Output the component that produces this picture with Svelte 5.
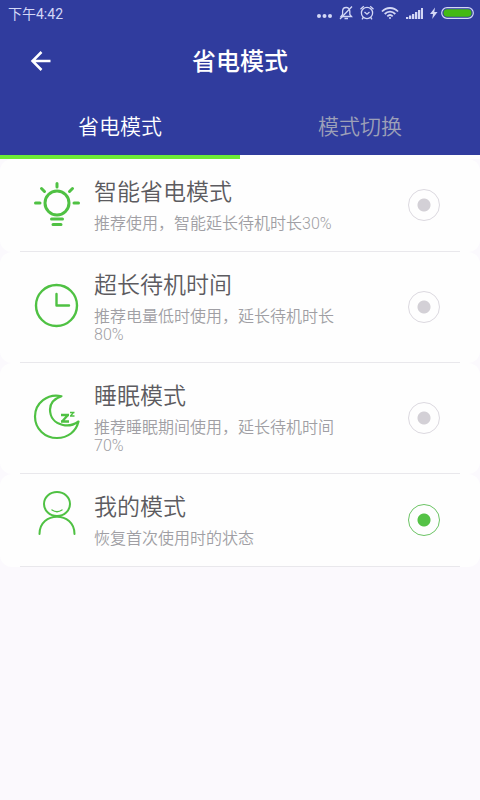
<script>
  const tabs = ['省电模式', '模式切换'];
  const modes = [
    { id: 'smart', title: '智能省电模式', desc: '推荐使用，智能延长待机时长30%' },
    { id: 'standby', title: '超长待机时间', desc: '推荐电量低时使用，延长待机时长80%' },
    { id: 'sleep', title: '睡眠模式', desc: '推荐睡眠期间使用，延长待机时间70%' },
    { id: 'mine', title: '我的模式', desc: '恢复首次使用时的状态' },
  ];

  let tab = 0;
  let selected = 'mine';
</script>

<header>
  <div class="status">
    <span>下午4:42</span>
    <div class="indicators">
      <svg width="15" height="16" fill="currentColor">
        <circle cx="2" cy="11" r="2" />
        <circle cx="7.5" cy="11" r="2" />
        <circle cx="13" cy="11" r="2" />
      </svg>
      <svg width="14" height="16" fill="none" stroke="currentColor" stroke-width="1.3">
        <path d="M2 11.5h10.5l-1.7-2V6.2C10.8 3.9 9.3 2.5 7.2 2.5S3.6 3.9 3.6 6.2v3.3z" />
        <path d="M5.5 13.5h3.5M1 14L13 1.5" />
      </svg>
      <svg width="14" height="16" fill="none" stroke="currentColor" stroke-width="1.3">
        <circle cx="7" cy="8" r="5.6" />
        <path d="M4.5 7l2.5 2.2L9.5 7M.5 4.2L3.8 1.2M13.5 4.2L10.2 1.2M3.3 12.5L2 14.3M10.7 12.5L12 14.3" />
      </svg>
      <svg width="18" height="16" fill="none" stroke="currentColor" stroke-width="1.8">
        <path d="M1 6.5C5.5 1.8 12.5 1.8 17 6.5M3.7 9C6.8 5.9 11.2 5.9 14.3 9M6.3 11.3C7.9 9.8 10.1 9.8 11.7 11.3" />
        <circle cx="9" cy="13" r="1" fill="currentColor" stroke="none" />
      </svg>
      <svg width="17" height="16" fill="currentColor">
        <path d="M0 12h2.3v2H0zM3 10.5h2.3V14H3zM6 9h2.3v5H6zM9 7h2.3v7H9zM12 5h2.3v9H12zM15 3h2v11h-2z" />
      </svg>
      <svg width="44" height="16">
        <path d="M5 2.5L0 9h3L2.2 14 7.5 7H4.3z" fill="currentColor" />
        <rect x="11.7" y="2.7" width="31.6" height="10.6" rx="5.3" fill="none" stroke="currentColor" stroke-width="1.2" />
        <rect x="13.5" y="4.3" width="28" height="7.5" rx="3.7" fill="#43b914" />
      </svg>
    </div>
  </div>

  <div class="bar">
    <button class="back" aria-label="返回">
      <svg width="24" height="24" fill="none" stroke="currentColor" stroke-width="2.5">
        <path d="M22.5 11H4M13.5 2L4.5 11l9 9" />
      </svg>
    </button>
    <h1>省电模式</h1>
  </div>

  <nav>
    {#each tabs as name, i}
      <button class:active={tab === i} on:click={() => (tab = i)}>{name}</button>
    {/each}
  </nav>
</header>

<main>
  {#each modes as mode}
    <label class="mode">
      <svg class="icon" viewBox="0 0 46 46" fill="none" stroke="currentColor" stroke-linecap="round" stroke-linejoin="round">
        {#if mode.id === 'smart'}
          <g stroke-width="3">
            <circle cx="23" cy="21" r="12" />
            <path d="M23 1.500v3.500M1.500 21h4.500M40 21h4.500M7.500 6.500l3 3M38.500 6.500l-3 3M17.500 37h11M19 42.500h8" />
          </g>
        {:else if mode.id === 'standby'}
          <g stroke-width="2.4">
            <circle cx="22.5" cy="21.5" r="20.5" />
            <path d="M22.5 10V21.500H35" />
          </g>
        {:else if mode.id === 'sleep'}
          <g stroke-width="2.2">
            <path d="M27.500 1.200C13.500-2 1 8 1 21.500 1 34 11 43 23 43c11 0 19-6.500 21.500-16.500-5 3.500-10 4.800-15.500 3.500C20 28 16 21.500 16 14.500 16 8.500 20.500 3.500 27.500 1.200z" />
          </g>
          <g stroke-linecap="butt" stroke-linejoin="miter">
            <path d="M27 20h8M27 26.500h8M33.500 20.500l-5 5.500" stroke-width="2.3" />
            <path d="M36 17.500h4.500M36 21h4.500M39.500 17.500l-3 3.500" stroke-width="1.3" />
          </g>
        {:else}
          <g stroke-width="2">
            <ellipse cx="23" cy="7" rx="13" ry="12" />
            <path d="M5.5 37C5.5 14 40.5 14 40.5 37" />
            <path d="M18 13c3 2 7 2 10 0" stroke-width="1.4" />
          </g>
        {/if}
      </svg>
      <span class="text">
        <span class="title">{mode.title}</span>
        <span class="desc">{mode.desc}</span>
      </span>
      <input type="radio" name="mode" value={mode.id} bind:group={selected} />
    </label>
  {/each}
</main>

<style>
  :global(body) {
    background: #fbf9fd;
    font-family: Roboto, "Noto Sans CJK SC", sans-serif;
  }

  button {
    padding: 0;
    border: 0;
    background: none;
    color: inherit;
    font: inherit;
    cursor: pointer;
  }

  svg {
    display: block;
  }

  header {
    background: #303c9e;
    color: #fff;
  }

  .status {
    display: flex;
    align-items: center;
    justify-content: space-between;
    height: 26px;
    padding: 0 6px 0 8px;
    color: #d3d7f6;
    font-size: 14px;
  }

  .indicators {
    display: flex;
    gap: 7px;
  }

  /* Title bar */
  .bar {
    display: grid;
    grid-template-columns: 56px 1fr 56px;
    align-items: center;
    height: 72px;
  }

  .back {
    justify-self: end;
    padding: 4px;
  }

  h1 {
    margin: 0;
    font-size: 24px;
    font-weight: 500;
    line-height: 32px;
    text-align: center;
  }

  /* Tabs */
  nav {
    display: flex;
    height: 61px;
    background: linear-gradient(#303c9e 57px, #fefefe 57px);
  }

  nav button {
    flex: 1;
    padding-bottom: 4px;
    border-bottom: 4px solid transparent;
    color: #9da0b8;
    font-size: 21px;
    font-weight: 350;
  }

  nav .active {
    border-color: #6cec35;
    color: #fff;
  }

  /* Mode list */
  .mode {
    position: relative;
    display: flex;
    align-items: center;
    padding: 18px 40px 19px 34px;
    border-radius: 12px;
    background: #fefefe;
    cursor: pointer;
  }

  .mode::after {
    content: "";
    position: absolute;
    right: 20px;
    bottom: 0;
    left: 20px;
    height: 1px;
    background: #e9e8ec;
  }

  .icon {
    flex: none;
    width: 46px;
    height: 46px;
    margin-right: 14px;
    overflow: visible;
    color: #4fc143;
  }

  .text {
    flex: 1;
    margin-right: 56px;
    font-weight: 350;
  }

  .title,
  .desc {
    display: block;
  }

  .title {
    margin-bottom: 6px;
    color: #5c5b60;
    font-size: 23px;
    line-height: 32px;
  }

  .desc {
    color: #a09fa4;
    font-size: 16px;
    line-height: 18px;
  }

  input {
    flex: none;
    width: 32px;
    height: 32px;
    margin: 0;
    border: 1px solid #dcd9e0;
    border-radius: 50%;
    background: radial-gradient(circle, #d3d0d6 6px, transparent 7px);
    appearance: none;
    cursor: pointer;
  }

  input:checked {
    border-color: #6cc465;
    background: radial-gradient(circle, #55c246 6px, transparent 7px);
  }
</style>
